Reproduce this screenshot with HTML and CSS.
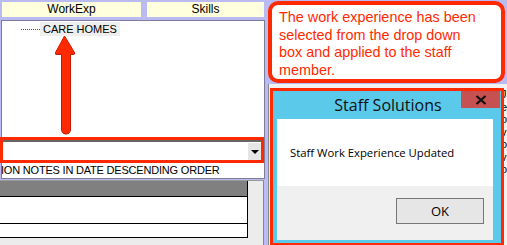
FILE: index.html
```html
<!DOCTYPE html>
<html>
<head>
<meta charset="utf-8">
<link rel="stylesheet" href="styles.css">
</head>
<body>
<div class="screen">
  <div class="left">
    <div class="tabs">
      <div class="tab tab-work">WorkExp</div>
      <div class="tab tab-skills">Skills</div>
    </div>
    <div class="panel">
      <div class="tree">
        <div class="node"><span class="dots"></span><span class="node-label">CARE HOMES</span></div>
      </div>
      <div class="combo">
        <div class="combo-field"></div>
        <div class="combo-btn"><span class="caret"></span></div>
      </div>
      <div class="notes-label">ION NOTES IN DATE DESCENDING ORDER</div>
    </div>
    <div class="lower">
      <div class="grid">
        <div class="grid-head"></div>
        <div class="grid-row row-tall"></div>
        <div class="grid-row row-short"></div>
      </div>
    </div>
  </div>
  <div class="right">
    <div class="side-panel">
      <div class="side-text">
        <div>J</div><div>e</div><div>o</div><div>v</div><div>o</div><div>v</div><div>o</div>
      </div>
    </div>
  </div>

  <svg class="arrow" width="30" height="105" viewBox="0 0 30 105">
    <path d="M14.5 1 L24.5 17.5 Q25.5 19.5 23 19.5 L20.5 19.5 L20.5 94 Q20.5 99 16 99 Q11.5 99 11.5 94 L11.5 19.5 L7 19.5 Q4.5 19.5 5.5 17.5 Z" fill="#ff2a00" stroke="#c81800" stroke-width="1"/>
  </svg>
  <div class="combo-mark"></div>

  <div class="callout">The work experience has been selected from the drop down box and applied to the staff member.</div>

  <div class="dialog">
    <div class="dlg-title">
      <span class="dlg-title-text">Staff Solutions</span>
      <span class="dlg-close">
        <svg width="12" height="10" viewBox="0 0 12 10"><path d="M1.5 1 L10.5 9 M10.5 1 L1.5 9" stroke="#111" stroke-width="2.2"/></svg>
      </span>
    </div>
    <div class="dlg-body">
      <div class="dlg-msg">Staff Work Experience Updated</div>
      <div class="dlg-foot"><button class="dlg-ok">OK</button></div>
    </div>
  </div>
</div>
</body>
</html>
```
FILE: styles.css
```css
html, body {
  margin: 0;
  padding: 0;
}
body {
  background: #bbbbf4;
  font-family: "Liberation Sans", Arial, sans-serif;
  overflow: hidden;
}
.screen {
  position: relative;
  width: 507px;
  height: 245px;
  overflow: hidden;
  display: flex;
}
.left {
  width: 265px;
  display: flex;
  flex-direction: column;
}
.tabs {
  display: flex;
  gap: 6px;
  padding: 2px 0 3px 2px;
}
.tab {
  height: 15px;
  background: #ffffde;
  font-size: 12px;
  line-height: 15px;
  text-align: center;
  color: #000;
}
.tab-work { width: 139px; }
.tab-skills { width: 117px; }

.panel {
  margin-left: 1px;
  width: 262px;
  height: 157px;
  background: #fff;
  border: 1px solid #7c7c98;
  display: flex;
  flex-direction: column;
}
.tree {
  flex: 1;
  padding-top: 1px;
}
.node {
  display: flex;
  align-items: center;
  height: 14px;
}
.dots {
  width: 19px;
  margin-left: 19px;
  border-top: 1px dotted #555;
}
.node-label {
  background: #eeeeee;
  font-size: 11px;
  line-height: 14px;
  padding: 0 3px;
  white-space: nowrap;
  color: #000;
}
.combo {
  height: 21px;
  display: flex;
  border-top: 2px solid #666;
  margin-bottom: 1px;
}
.combo-field {
  flex: 1;
  background: #fff;
}
.combo-btn {
  width: 14px;
  height: 17px;
  margin: 1px 2px 0 0;
  background: #e6e6e6;
  border-bottom: 1px solid #999;
  display: flex;
  align-items: center;
  justify-content: center;
}
.caret {
  width: 0;
  height: 0;
  border-left: 4px solid transparent;
  border-right: 4px solid transparent;
  border-top: 4px solid #000;
}
.notes-label {
  font-size: 11px;
  letter-spacing: -0.2px;
  line-height: 13px;
  height: 14px;
  white-space: nowrap;
  overflow: hidden;
  color: #000;
  margin-left: -1px;
}
.lower {
  margin-top: 1px;
  flex: 1;
  width: 263px;
  background: #ececec;
  border-right: 1px solid #888;
  border-top: 1px solid #999;
}
.grid {
  width: 247px;
  border-right: 1px solid #000;
}
.grid-head {
  height: 15px;
  background: #808080;
  border-bottom: 1px solid #000;
}
.grid-row {
  background: #fff;
  border-bottom: 1px solid #000;
}
.row-tall { height: 26px; }
.row-short { height: 13px; }

.right {
  flex: 1;
  display: flex;
  padding-left: 3px;
}
.side-panel {
  flex: 1;
  border-left: 1px solid #888;
  background: #f2f2f2;
  margin-top: 84px;
  overflow: hidden;
}
.side-text {
  padding: 4px 0 0 232px;
  font-family: "Liberation Sans", Arial, sans-serif;
  font-size: 11px;
  line-height: 12.5px;
  color: #000;
}

.arrow {
  position: absolute;
  left: 50px;
  top: 35px;
}
.combo-mark {
  position: absolute;
  left: 0;
  top: 137px;
  width: 258px;
  height: 20px;
  border: 3px solid #ff2a00;
}
.callout {
  position: absolute;
  left: 268px;
  top: 1px;
  width: 208px;
  height: 70px;
  padding: 4px 14px 0 7px;
  border: 4px solid #ff2a00;
  border-radius: 10px;
  background: #fff;
  color: #ff2a00;
  font-family: "Liberation Sans", Arial, sans-serif;
  font-size: 14.4px;
  line-height: 17.5px;
}
.dialog {
  position: absolute;
  left: 270px;
  top: 88px;
  width: 216px;
  height: 149px;
  padding: 0 8px 3px 4px;
  border: 3px solid #ff2a00;
  background: #5bc9ea;
  display: flex;
  flex-direction: column;
}
.dlg-title {
  height: 28px;
  position: relative;
  display: flex;
  align-items: center;
  justify-content: center;
}
.dlg-title-text {
  font-family: "Open Sans", "Noto Sans", sans-serif;
  font-size: 16px;
  color: #111;
  margin-left: 6px;
}
.dlg-close {
  position: absolute;
  right: -7px;
  top: 0;
  width: 39px;
  height: 17px;
  background: #c75050;
  display: flex;
  align-items: center;
  justify-content: center;
}
.dlg-body {
  flex: 1;
  display: flex;
  flex-direction: column;
}
.dlg-msg {
  height: 67px;
  background: #fff;
  font-family: "Open Sans", "Noto Sans", sans-serif;
  font-size: 11.3px;
  line-height: 16px;
  padding: 26px 0 0 13px;
  box-sizing: border-box;
  color: #000;
}
.dlg-foot {
  flex: 1;
  background: #f0f0f0;
  display: flex;
  justify-content: flex-end;
  align-items: flex-start;
  padding: 12px 9px 0 0;
}
.dlg-ok {
  width: 88px;
  height: 26px;
  border: 1px solid #777;
  background: #e6e6e6;
  font-family: "Open Sans", "Noto Sans", sans-serif;
  font-size: 13px;
  color: #000;
  padding: 0;
}
```
